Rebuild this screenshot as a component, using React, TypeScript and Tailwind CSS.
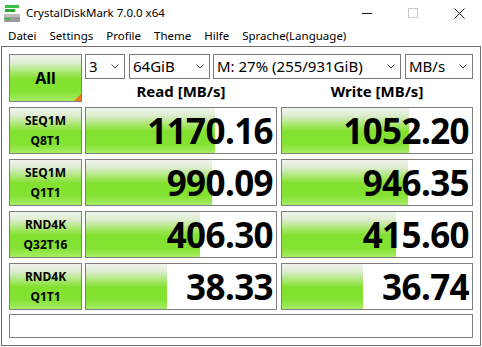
import { ReactNode } from "react";

interface Row {
  line1: string;
  line2: string;
  read: string;
  write: string;
  readBar: number;
  writeBar: number;
}

const rows: Row[] = [
  { line1: "SEQ1M", line2: "Q8T1", read: "1170.16", write: "1052.20", readBar: 129, writeBar: 127 },
  { line1: "SEQ1M", line2: "Q1T1", read: "990.09", write: "946.35", readBar: 126, writeBar: 126 },
  { line1: "RND4K", line2: "Q32T16", read: "406.30", write: "415.60", readBar: 114, writeBar: 114 },
  { line1: "RND4K", line2: "Q1T1", read: "38.33", write: "36.74", readBar: 81, writeBar: 81 },
];

const green =
  "bg-[linear-gradient(to_bottom,#f2f4f0_0%,#dbeccb_18%,#a6e76a_38%,#82e02f_52%,#84e232_80%,#a6ee66_100%)]";

const Chevron = () => (
  <svg width="8" height="5" viewBox="0 0 8 5" className="shrink-0">
    <polyline points="0.5,0.5 4,4 7.5,0.5" fill="none" stroke="#444" strokeWidth="1" />
  </svg>
);

const Select = ({ w, children }: { w: string; children: ReactNode }) => (
  <div className={`${w} h-[25px] border border-[#7a7a7a] bg-white flex items-center justify-between pl-[3px] pr-[5px] text-[15px] text-black`}>
    <span className="leading-none">{children}</span>
    <Chevron />
  </div>
);

const ValueCell = ({ value, bar }: { value: string; bar: number }) => (
  <div
    className={`w-[192px] h-full border border-[#7f7f7f] bg-white ${green} bg-no-repeat flex items-center justify-end pr-[3px]`}
    style={{ backgroundSize: `${bar}px 100%` }}
  >
    <span className="text-[35px] font-bold leading-none tracking-[-0.6px] text-black">{value}</span>
  </div>
);

const AppIcon = () => (
  <svg width="16" height="17" viewBox="0 0 16 17">
    <rect x="1" y="0" width="14" height="3" fill="#3cc046" />
    <rect x="1" y="4" width="10" height="3" fill="#2fa83a" />
    <rect x="0" y="9" width="16" height="8" rx="1" fill="#9a9a9a" />
    <rect x="0" y="9" width="16" height="3" fill="#bdbdbd" />
    <rect x="2" y="13" width="4" height="2" fill="#3cc046" />
  </svg>
);

export default function App() {
  return (
    <div className="w-[482px] h-[347px] bg-white overflow-hidden font-['Noto_Sans',sans-serif] text-black">
      {/* Title bar */}
      <div className="h-[26px] flex items-center">
        <div className="pl-[4px] pr-[6px] pt-[1px]">
          <AppIcon />
        </div>
        <span className="text-[11.5px] leading-none">CrystalDiskMark 7.0.0 x64</span>
        <div className="ml-auto flex items-center">
          <div className="w-[46px] flex justify-center">
            <svg width="10" height="10" viewBox="0 0 10 10">
              <line x1="0" y1="5.5" x2="10" y2="5.5" stroke="#111" strokeWidth="1" />
            </svg>
          </div>
          <div className="w-[46px] flex justify-center">
            <svg width="10" height="10" viewBox="0 0 10 10">
              <rect x="0.5" y="0.5" width="9" height="9" fill="none" stroke="#c8c8c8" strokeWidth="1" />
            </svg>
          </div>
          <div className="w-[46px] flex justify-center">
            <svg width="11" height="11" viewBox="0 0 11 11">
              <path d="M0.5 0.5 L10.5 10.5 M10.5 0.5 L0.5 10.5" stroke="#111" strokeWidth="1" />
            </svg>
          </div>
        </div>
      </div>

      {/* Menu bar */}
      <div className="h-[20px] flex items-center gap-[13px] pl-[8px] text-[11.5px] leading-none">
        <span>Datei</span>
        <span>Settings</span>
        <span>Profile</span>
        <span>Theme</span>
        <span>Hilfe</span>
        <span>Sprache(Language)</span>
      </div>

      {/* Client area */}
      <div className="ml-[1px] w-[480px] h-[300px] border border-[#6e6e6e] p-[7px] flex flex-col">
        <div className="flex gap-[3px] h-[48px]">
          <div className={`relative w-[73px] h-full border border-[#7f7f7f] ${green} flex items-center justify-center`}>
            <span className="text-[16px] font-bold leading-none">All</span>
            <div className="absolute right-0 bottom-0 w-0 h-0 border-l-[7px] border-l-transparent border-b-[7px] border-b-[#f07818]" />
          </div>
          <div className="w-[388px] flex flex-col">
            <div className="flex">
              <Select w="w-[40px]">3</Select>
              <div className="w-[4px]" />
              <Select w="w-[81px]">64GiB</Select>
              <div className="w-[3px]" />
              <Select w="w-[188px]">M: 27% (255/931GiB)</Select>
              <div className="w-[4px]" />
              <Select w="w-[68px]">MB/s</Select>
            </div>
            <div className="flex flex-1 items-center gap-[4px] pt-[2px]">
              <div className="w-[192px] text-center text-[15px] font-bold leading-none">Read [MB/s]</div>
              <div className="w-[192px] text-center text-[15px] font-bold leading-none">Write [MB/s]</div>
            </div>
          </div>
        </div>

        <div className="flex flex-col gap-[5px] mt-[5px]">
          {rows.map((r, i) => (
            <div key={i} className="flex gap-[3px] h-[47px]">
              <div className={`w-[73px] h-full border border-[#7f7f7f] ${green} flex flex-col items-center justify-center gap-[8px] text-[12px] font-bold leading-none`}>
                <span>{r.line1}</span>
                <span>{r.line2}</span>
              </div>
              <div className="flex gap-[4px]">
                <ValueCell value={r.read} bar={r.readBar} />
                <ValueCell value={r.write} bar={r.writeBar} />
              </div>
            </div>
          ))}
        </div>

        <div className="mt-[4px] h-[24px] border border-[#7f7f7f] bg-white" />
      </div>
    </div>
  );
}
